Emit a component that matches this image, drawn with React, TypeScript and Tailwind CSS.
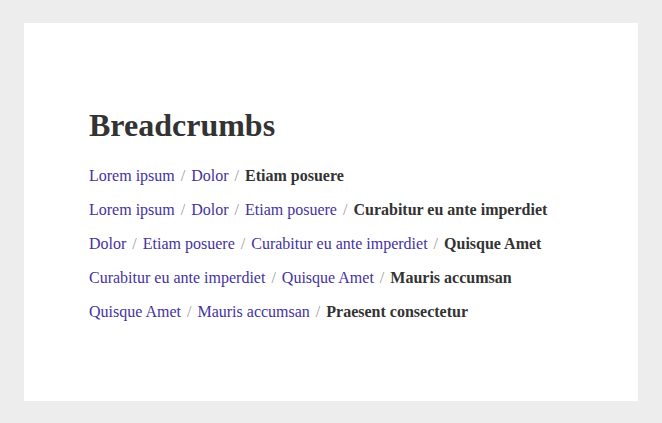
import React from 'react'

const trails: string[][] = [
  ['Lorem ipsum', 'Dolor', 'Etiam posuere'],
  ['Lorem ipsum', 'Dolor', 'Etiam posuere', 'Curabitur eu ante imperdiet'],
  ['Dolor', 'Etiam posuere', 'Curabitur eu ante imperdiet', 'Quisque Amet'],
  ['Curabitur eu ante imperdiet', 'Quisque Amet', 'Mauris accumsan'],
  ['Quisque Amet', 'Mauris accumsan', 'Praesent consectetur'],
]

function Breadcrumb({ items }: { items: string[] }) {
  return (
    <nav aria-label="breadcrumb">
      <ol className="flex items-center text-[16px] leading-[34px]">
        {items.map((item, i) => {
          const last = i === items.length - 1
          return (
            <li key={i} className="flex items-center">
              {last ? (
                <span className="font-bold text-[#333333]">{item}</span>
              ) : (
                <>
                  <a href="#" className="text-[#4433a0]">{item}</a>
                  <span className="px-[6px] text-[#999999]">/</span>
                </>
              )}
            </li>
          )
        })}
      </ol>
    </nav>
  )
}

export default function App() {
  return (
    <div className="h-screen bg-[#ededed] px-[24px] pt-[23px] font-['Liberation_Serif',serif]">
      <div className="h-[378px] bg-white px-[65px] pt-[84px]">
        <h1 className="mb-[16px] text-[32px] font-bold leading-[36px] text-[#333333]">Breadcrumbs</h1>
        {trails.map((t, i) => (
          <Breadcrumb key={i} items={t} />
        ))}
      </div>
    </div>
  )
}
